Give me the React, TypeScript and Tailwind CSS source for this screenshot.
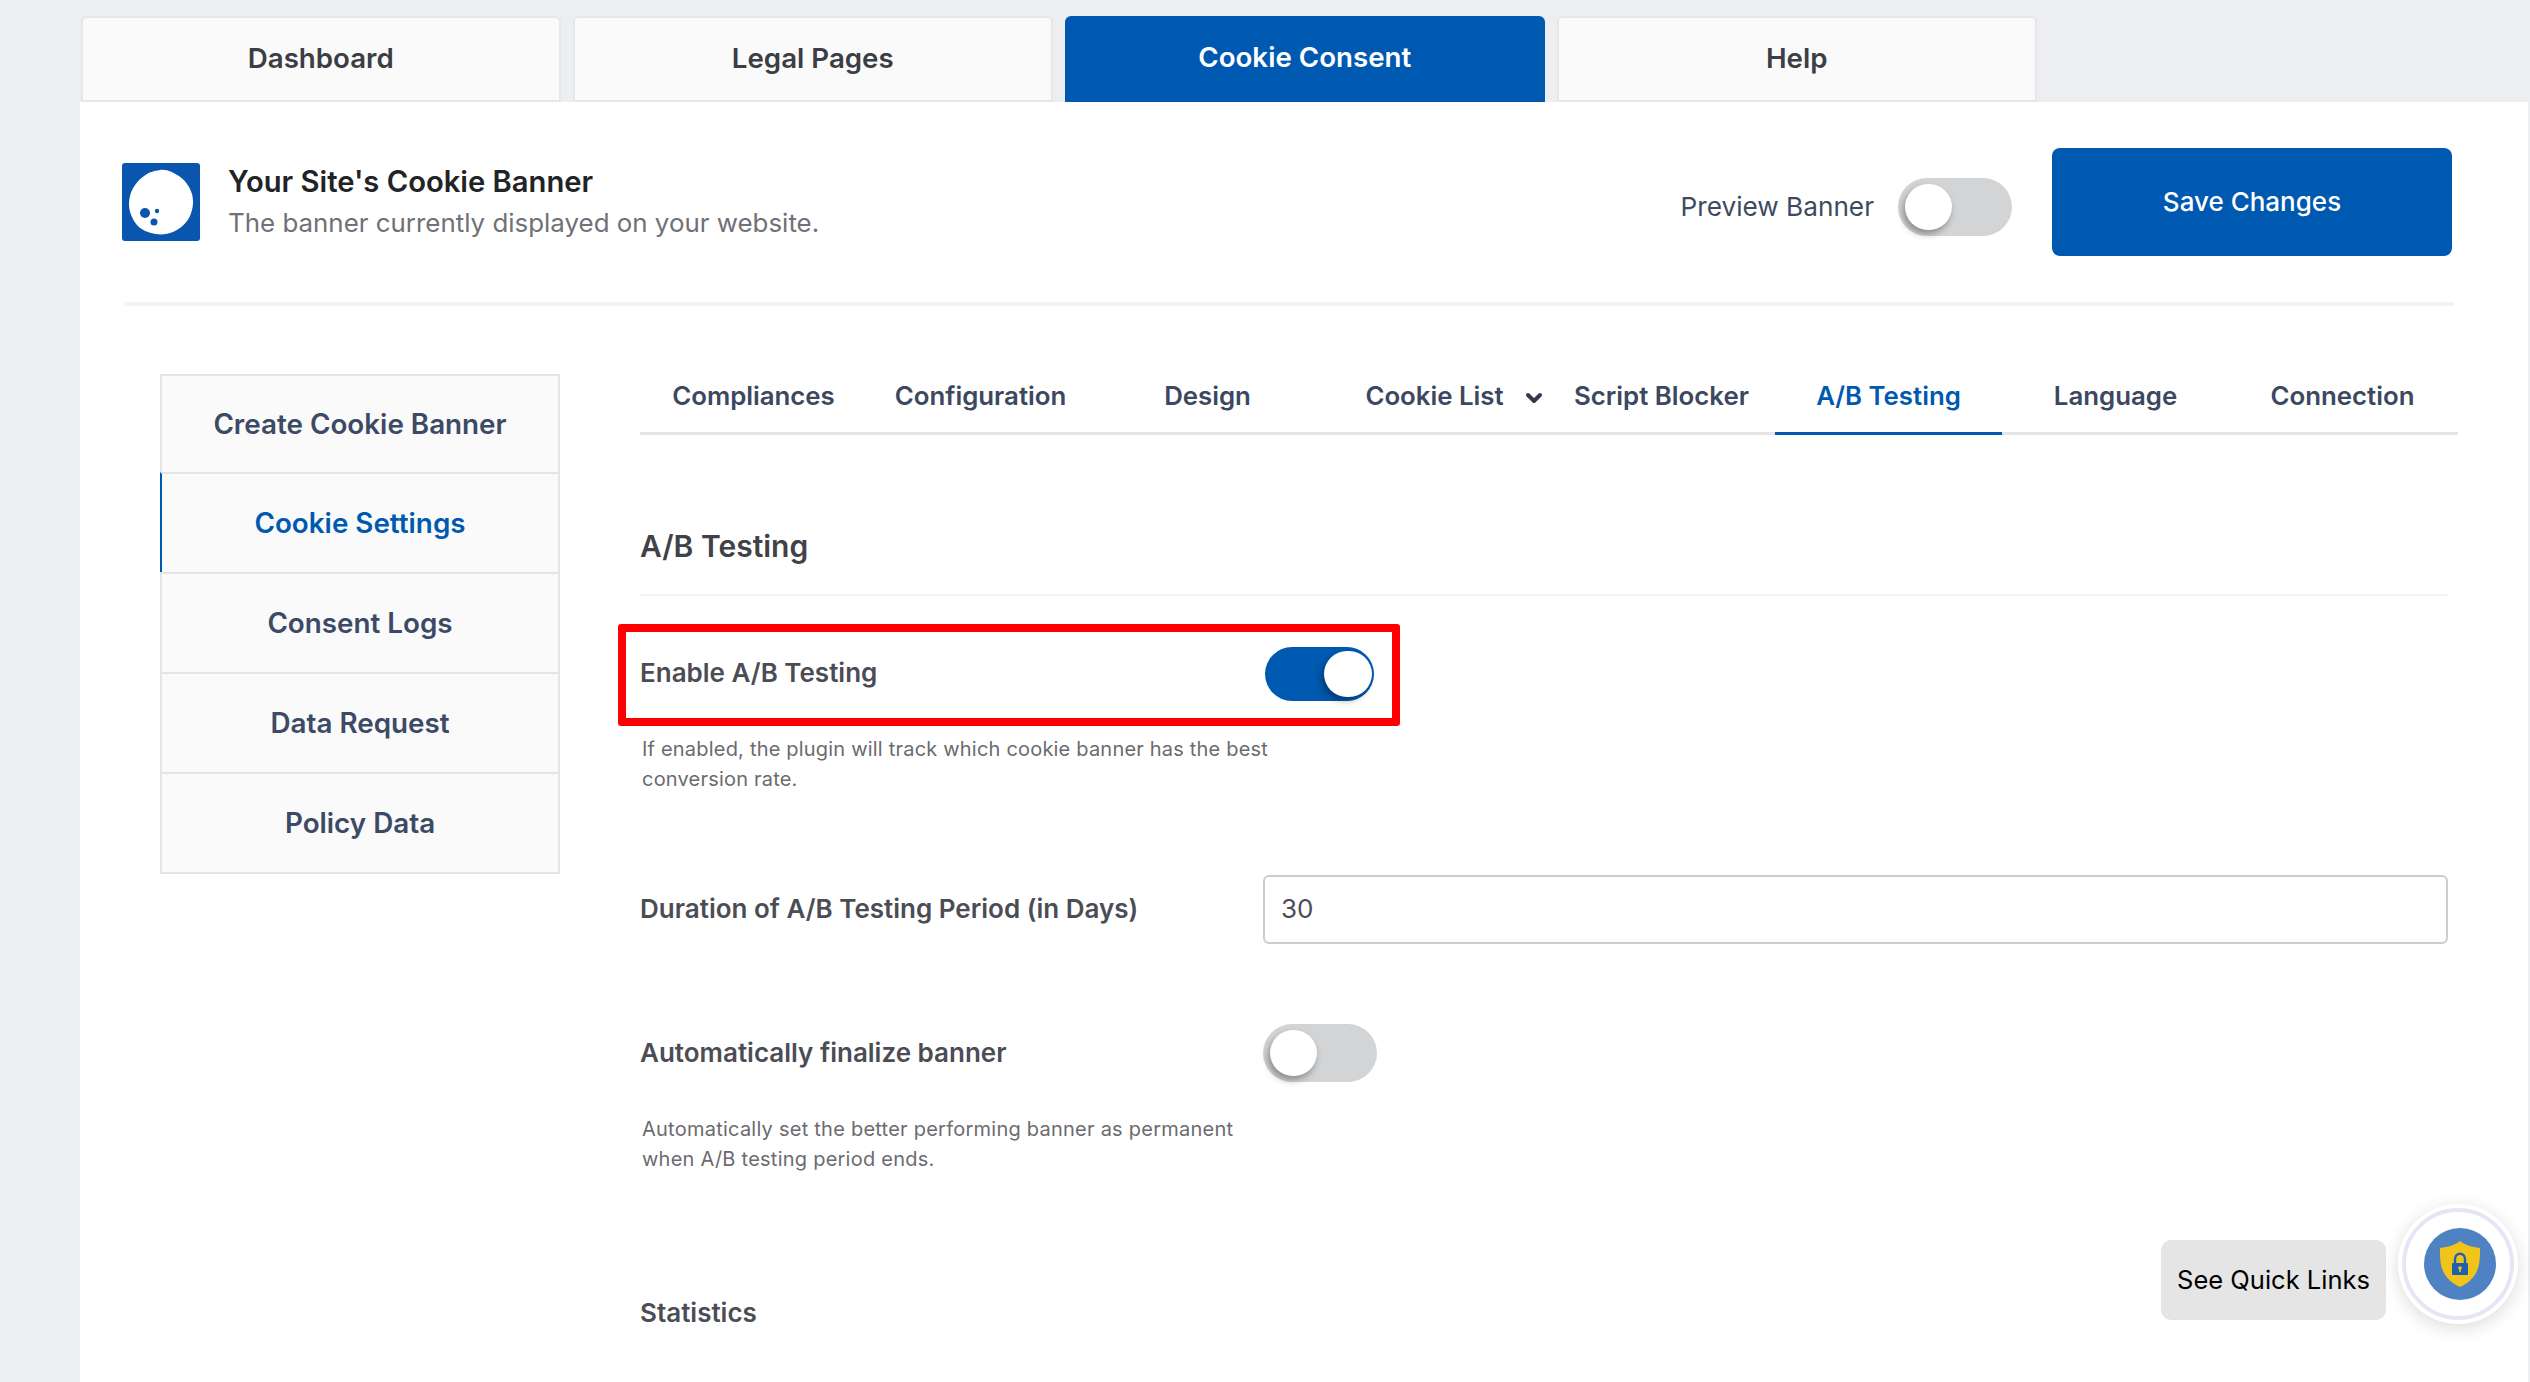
import { ChevronDown } from "lucide-react";

const topTabs = ["Dashboard", "Legal Pages", "Cookie Consent", "Help"];
const sideItems = ["Create Cookie Banner", "Cookie Settings", "Consent Logs", "Data Request", "Policy Data"];
const subTabs = ["Compliances", "Configuration", "Design", "Cookie List", "Script Blocker", "A/B Testing", "Language", "Connection"];

function Toggle({ on = false, className = "" }: { on?: boolean; className?: string }) {
  if (on) {
    return (
      <div className={`flex h-[54px] w-[109px] items-center justify-end rounded-full bg-[#0059b0] pr-[2px] ${className}`}>
        <div className="h-[46px] w-[48px] rounded-full bg-white shadow-[-3px_4px_6px_rgba(0,0,0,0.3)]" />
      </div>
    );
  }
  return (
    <div className={`flex h-[58px] w-[114px] items-center rounded-full bg-[#d3d4d6] pl-[7px] ${className}`}>
      <div className="h-[46px] w-[47px] rounded-full bg-white shadow-[-2px_4px_7px_rgba(0,0,0,0.35)]" />
    </div>
  );
}

function CookieIcon() {
  return (
    <svg viewBox="0 0 78 78" className="h-[78px] w-[78px] shrink-0 rounded-[3px] bg-[#0a55ae]">
      <path
        fill="#fff"
        d="M38 7 C46 6 51 10 57 13 C63 17 68 24 70 31 C72 39 71 46 68 53 C65 60 58 66 51 69 C44 72 36 72 29 70 C21 68 14 63 11 56 C7 49 6 41 8 33 C10 25 15 18 22 13 C27 9 32 8 38 7 Z"
      />
      <circle cx="23" cy="50" r="5" fill="#0a55ae" />
      <circle cx="35" cy="48" r="2.2" fill="#0a55ae" />
      <circle cx="32" cy="59" r="3.5" fill="#0a55ae" />
    </svg>
  );
}

function ShieldBadge() {
  return (
    <div className="absolute left-[2398px] top-[1204px] flex h-[120px] w-[120px] items-center justify-center rounded-full bg-white shadow-[0_4px_18px_rgba(0,0,0,0.14)]">
      <div className="flex h-[112px] w-[112px] items-center justify-center rounded-full border-[4px] border-[#e5e5f6]">
        <div className="ml-[4px] flex h-[72px] w-[72px] items-center justify-center rounded-full bg-[#4f82c3]">
          <svg viewBox="0 0 40 46" className="h-[46px] w-[40px]">
            <path fill="#f0c419" d="M20 0 C25 4 32 6 40 7 C40 16 40 23 37 30 C34 37 27 43 20 46 C13 43 6 37 3 30 C0 23 0 16 0 7 C8 6 15 4 20 0 Z" />
            <path fill="none" stroke="#1f5fae" strokeWidth="2.4" d="M15 23 V18 C15 11 25 11 25 18 V23" />
            <rect x="12" y="22" width="16" height="12" rx="1" fill="#1f5fae" />
            <circle cx="20" cy="27" r="1.8" fill="#f0c419" />
            <rect x="19.2" y="27" width="1.6" height="4" fill="#f0c419" />
          </svg>
        </div>
      </div>
    </div>
  );
}

export default function App() {
  return (
    <div className="relative h-[1382px] w-[2530px] overflow-hidden bg-[#eceef0] pl-[80px] pr-[2px] pt-[16px] font-['Inter',sans-serif]">
      <div className="flex gap-[12.5px] pl-[1px]">
        {topTabs.map((t) => (
          <div
            key={t}
            className={
              t === "Cookie Consent"
                ? "flex h-[86px] w-[479.5px] items-center justify-center rounded-t-[6px] bg-[#0059b0] pb-[2px] text-[27.7px] font-semibold text-white"
                : "flex h-[86px] w-[479.5px] items-center justify-center rounded-t-[6px] border-[2px] border-[#e6e7e9] bg-[#fafafa] pb-[1px] text-[27.7px] font-semibold text-[#3b3e44]"
            }
          >
            {t}
          </div>
        ))}
      </div>

      <div className="h-[1280px] bg-white">
        <div className="ml-[45px] mr-[74px] flex items-center border-b-[4px] border-[#f3f3f3] pb-[46px] pr-[2px] pt-[46px]">
          <div className="-ml-[3px] flex items-center gap-[28px]">
            <CookieIcon />
            <div>
              <div className="text-[29.2px] font-semibold leading-[42px] text-[#222326]">Your Site's Cookie Banner</div>
              <div className="text-[25.9px] leading-[40px] text-[#6f7177]">The banner currently displayed on your website.</div>
            </div>
          </div>
          <div className="ml-auto flex items-center">
            <span className="mt-[10px] text-[26.2px] text-[#3e4a60]">Preview Banner</span>
            <Toggle className="ml-[24px] mt-[10px]" />
            <div className="ml-[40px] flex h-[108px] w-[400px] items-center justify-center rounded-[8px] bg-[#0059b0] pb-[2px] text-[26px] font-medium text-white">
              Save Changes
            </div>
          </div>
        </div>

        <div className="flex gap-[80px] pl-[80px] pt-[68px]">
          <div className="w-[400px] shrink-0 self-start border-[2px] border-[#e5e5e5] bg-[#fafafa]">
            {sideItems.map((s, i) => (
              <div
                key={s}
                className={`flex items-center justify-center pt-[2px] text-[27.8px] font-semibold ${i > 0 ? "h-[100px] border-t-[2px] border-[#e5e5e5]" : "h-[96px]"} ${
                  s === "Cookie Settings" ? "-ml-[2px] border-l-[2px] border-l-[#0059b0] text-[#0059b0]" : "text-[#3c4a66]"
                }`}
              >
                {s}
              </div>
            ))}
          </div>

          <div className="w-[1818px]">
            <div className="flex border-b-[3px] border-[#e5e5e5]">
              {subTabs.map((t) => (
                <div
                  key={t}
                  className={`relative -mb-[3px] flex h-[61px] w-[227px] items-center justify-center border-b-[3px] pb-[13px] text-[25.8px] font-semibold ${
                    t === "A/B Testing" ? "border-[#0059b0] text-[#0059b0]" : "border-transparent text-[#3c4760]"
                  }`}
                >
                  {t}
                  {t === "Cookie List" ? (
                    <ChevronDown size={24} strokeWidth={4} className="absolute left-[201px] top-[12px] text-[#333a4a]" />
                  ) : null}
                </div>
              ))}
            </div>

            <div className="mt-[91px] pb-[28px] text-[30px] font-semibold leading-[40px] text-[#404248]">A/B Testing</div>
            <div className="w-[1808px] border-b-[2px] border-[#f3f3f3]" />

            <div className="-ml-[22px] mt-[28px] flex h-[102px] w-[782px] items-center justify-between rounded-[3px] border-[8px] border-[#ff0000] pb-[2px] pl-[14px] pr-[18px]">
              <span className="-mt-[3px] text-[26px] font-semibold text-[#4b4d55]">Enable A/B Testing</span>
              <Toggle on />
            </div>
            <p className="mt-[8px] w-[640px] pl-[2px] text-[20px] leading-[30px] tracking-[0.2px] text-[#6b6b70]">
              If enabled, the plugin will track which cookie banner has the best conversion rate.
            </p>

            <div className="mt-[81px] flex h-[69px] items-center">
              <span className="-mt-[2px] w-[623px] text-[26px] font-semibold text-[#4b4d55]">Duration of A/B Testing Period (in Days)</span>
              <div className="flex h-[69px] w-[1185px] items-center rounded-[6px] border-[2px] border-[#cdcdcd] pb-[2px] pl-[16px] text-[26px] text-[#4b4d55]">30</div>
            </div>

            <div className="mt-[80px] flex items-center">
              <span className="-mt-[1px] w-[623px] text-[26px] font-semibold text-[#4b4d55]">Automatically finalize banner</span>
              <Toggle />
            </div>
            <p className="mt-[32px] w-[640px] pl-[2px] text-[20px] leading-[30px] tracking-[0.24px] text-[#6b6b70]">
              Automatically set the better performing banner as permanent when A/B testing period ends.
            </p>

            <div className="mt-[121px] text-[26px] font-semibold leading-[36px] text-[#4b4d55]">Statistics</div>
          </div>
        </div>
      </div>

      <div className="absolute left-[2161px] top-[1240px] flex h-[80px] w-[225px] items-center justify-center rounded-[10px] bg-[#e5e5e5] text-[25.5px] text-black">
        See Quick Links
      </div>
      <ShieldBadge />
    </div>
  );
}
